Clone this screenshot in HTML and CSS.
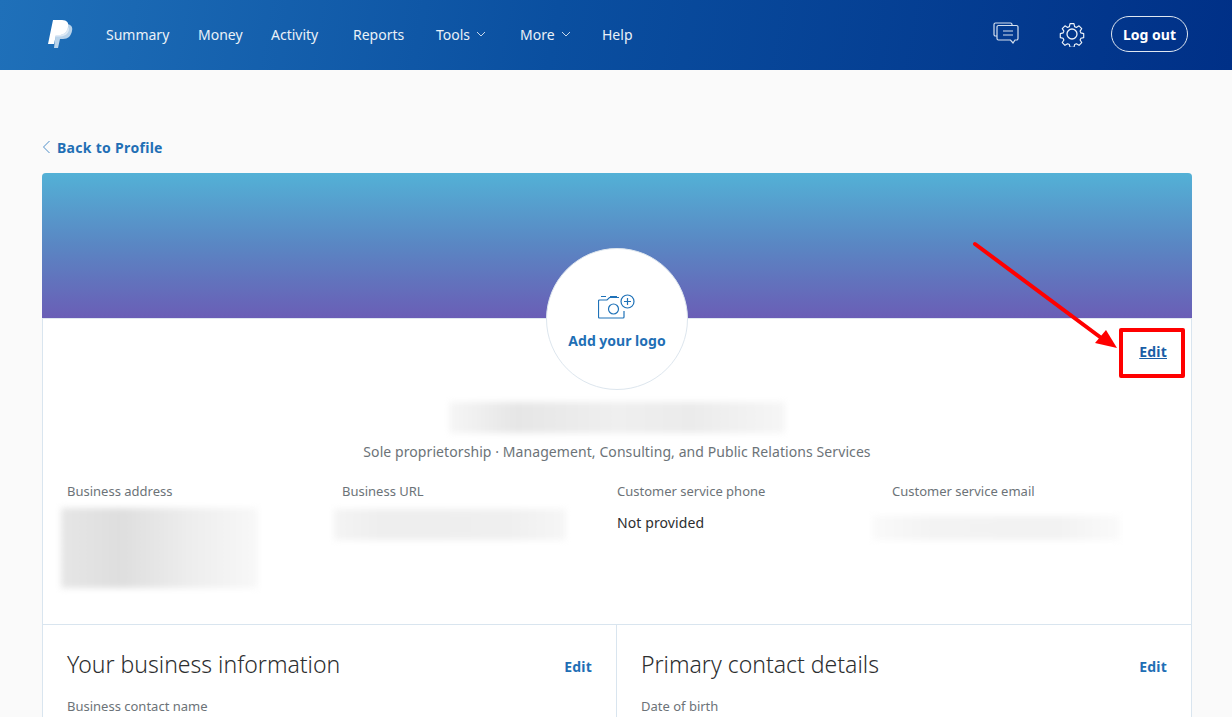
FILE: index.html
```html
<!DOCTYPE html>
<html lang="en">
<head>
  <meta charset="UTF-8" />
  <title>Business Profile</title>
  <link rel="stylesheet" href="styles.css">
</head>
<body>

  <nav class="topbar">
    <svg class="logo" width="26" height="30" viewBox="0 0 26 30">
      <path d="M9 5h9c5 0 7 3 6 7-1 5-4 8-9 8h-3l-2 9H6z" fill="#b9d3ea"/>
      <path d="M5 1h9c5 0 7 3 6 7-1 6-5 8-9 8H8l-2 9H0z" fill="#fff"/>
      <path d="M8 16h3c4 0 8-2 9-8 1 1 1 2 .8 3.500C20 15 17 17 13 17.500H8z" fill="#dfeaf5"/>
    </svg>
    <div class="nav-links">
      <a class="nav-link" href="#">Summary</a>
      <a class="nav-link" href="#">Money</a>
      <a class="nav-link" href="#">Activity</a>
      <a class="nav-link" href="#">Reports</a>
      <a class="nav-link" href="#">Tools
        <svg class="caret" width="10" height="6" viewBox="0 0 10 6"><path d="M1 1l4 4 4-4" fill="none" stroke="#c9d8ea"/></svg>
      </a>
      <a class="nav-link" href="#">More
        <svg class="caret" width="10" height="6" viewBox="0 0 10 6"><path d="M1 1l4 4 4-4" fill="none" stroke="#c9d8ea"/></svg>
      </a>
      <a class="nav-link" href="#">Help</a>
    </div>

    <div class="nav-right">
      <svg class="msg-icon" width="26" height="24" viewBox="0 0 26 24" fill="none" stroke="#d5e0ee" stroke-width="1.200">
        <path d="M19 3.500V2.500a1.500 1.500 0 0 0-1.500-1.500H2.500A1.500 1.500 0 0 0 1 2.500v10A1.500 1.500 0 0 0 2.500 14H4"/>
        <path d="M5.500 3.500h18A1.500 1.500 0 0 1 25 5v11.500a1.500 1.500 0 0 1-1.500 1.500H22l-2 3-2.500-3H5.500A1.500 1.500 0 0 1 4 16.500V5a1.500 1.500 0 0 1 1.500-1.500z"/>
        <path d="M10 9h10M10 13h10"/>
      </svg>
      <svg class="gear-icon" width="26" height="26" viewBox="0 0 26 26" fill="none" stroke="#eef3f9" stroke-width="1.300" stroke-linejoin="round">
        <circle cx="13" cy="13" r="5"/>
        <path d="M10.800 1.500h4.400l.7 3.300 2 .9 2.900-1.800 3 3.100-1.800 2.800.9 2 3.100.8v4.400l-3.100.7-.9 2 1.800 2.800-3 3.100-2.900-1.800-2 .9-.7 3.100h-4.400l-.7-3.100-2-.9-2.900 1.800-3-3.100 1.800-2.800-.9-2-3.100-.7v-4.400l3.100-.8.9-2-1.800-2.800 3-3.100 2.900 1.800 2-.9z" transform="translate(1.300 1.300) scale(.9)"/>
      </svg>
      <a class="logout" href="#">Log out</a>
    </div>
  </nav>

  <main class="page">
    <a class="back-link" href="#">
      <svg width="9" height="14" viewBox="0 0 9 14"><path d="M7.500 1L1.500 7l6 6" fill="none" stroke="#4f8fc9"/></svg>
      Back to Profile
    </a>

    <section class="card">
      <div class="banner"></div>

      <div class="logo-circle">
        <svg width="38" height="26" viewBox="0 0 38 26" fill="none" stroke="#1f72b8" stroke-width="1.200">
          <path d="M3 2.500h5M12 2.500h7M26 17v6a1 1 0 0 1-1 1H1.500a1 1 0 0 1-1-1V7a1 1 0 0 1 1-1H9l2.500-2.500H21"/>
          <circle cx="15.500" cy="15" r="5"/>
          <circle cx="29.500" cy="7.500" r="6.500"/>
          <path d="M29.500 4v7M26 7.500h7"/>
        </svg>
        <span class="logo-label">Add your logo</span>
      </div>

      <a class="edit edit-main" href="#">Edit</a>

      <div class="identity">
        <div class="smudge smudge-name"></div>
        <p class="biz-type">Sole proprietorship · Management, Consulting, and Public Relations Services</p>
      </div>

      <div class="details">
        <div class="detail">
          <div class="label">Business address</div>
          <div class="smudge smudge-address"></div>
        </div>
        <div class="detail">
          <div class="label">Business URL</div>
          <div class="smudge smudge-url"></div>
        </div>
        <div class="detail">
          <div class="label">Customer service phone</div>
          <div class="value">Not provided</div>
        </div>
        <div class="detail">
          <div class="label">Customer service email</div>
          <div class="smudge smudge-email"></div>
        </div>
      </div>

      <div class="panels">
        <div class="panel">
          <div class="panel-head">
            <h2>Your business information</h2>
            <a class="edit" href="#">Edit</a>
          </div>
          <div class="label">Business contact name</div>
        </div>
        <div class="panel">
          <div class="panel-head">
            <h2>Primary contact details</h2>
            <a class="edit" href="#">Edit</a>
          </div>
          <div class="label">Date of birth</div>
        </div>
      </div>
    </section>
  </main>

  <!-- annotation drawn over the page -->
  <div class="red-box"></div>
  <svg class="red-arrow" width="160" height="120" viewBox="0 0 160 120">
    <path d="M6 4L131 97" stroke="#f00" stroke-width="4" stroke-linecap="round"/>
    <path d="M148 108L126 103 137 90z" fill="#f00"/>
  </svg>

</body>
</html>
```

FILE: styles.css
```css
html, body {
  height: 717px;
  overflow: hidden;
}

body {
  margin: 0;
  background-color: #fafafa;
  font-family: "Noto Sans", sans-serif;
  color: #2c2e2f;
}

a {
  text-decoration: none;
}

.topbar {
  height: 70px;
  box-sizing: border-box;
  padding: 0 44px 2px 48px;
  display: flex;
  align-items: center;
  background: linear-gradient(100deg, #1f70b9 0%, #0a4fa0 45%, #003087 100%);
}

.logo {
  margin-right: 32px;
}

.nav-links {
  display: grid;
  grid-template-columns: 92px 73px 82px 83px 84px 82px auto;
}

.nav-link {
  color: #eaf1f8;
  font-size: 14px;
  display: flex;
  align-items: center;
  gap: 6px;
}

.nav-right {
  margin-left: auto;
  display: flex;
  align-items: center;
}

.msg-icon {
  margin-right: 40px;
}

.gear-icon {
  margin-right: 26px;
}

.logout {
  width: 77px;
  height: 36px;
  box-sizing: border-box;
  border: 1px solid #dfe7f1;
  border-radius: 18px;
  color: #fff;
  font-size: 14px;
  font-weight: 700;
  display: flex;
  align-items: center;
  justify-content: center;
}

.page {
  padding: 67px 40px 0 42px;
}

.back-link {
  height: 20px;
  display: flex;
  align-items: center;
  gap: 6px;
  color: #1f6fb5;
  font-size: 14px;
  font-weight: 700;
  letter-spacing: .3px;
}

.card {
  position: relative;
  margin-top: 16px;
  background-color: #fff;
  border: 1px solid #d9e5ef;
  border-top: none;
  border-radius: 4px 4px 0 0;
}

.banner {
  margin: 0 -1px;
  height: 145px;
  border-radius: 4px 4px 0 0;
  background: linear-gradient(180deg, #53b1d6 0%, #5a86c3 50%, #6a5eb6 100%);
  border-bottom: 1px solid #dfe8f0;
}

.logo-circle {
  position: absolute;
  top: 75px;
  left: 503px;
  width: 142px;
  height: 142px;
  box-sizing: border-box;
  border: 1px solid #dde6ee;
  border-radius: 50%;
  background-color: #fff;
  display: flex;
  flex-direction: column;
  align-items: center;
  padding-top: 45px;
  gap: 11px;
}

.logo-label {
  color: #1f6fb5;
  font-size: 14px;
  font-weight: 700;
  line-height: 20px;
}

.edit {
  color: #1f6fb5;
  font-size: 14px;
  font-weight: 700;
  letter-spacing: .2px;
}

.edit-main {
  position: absolute;
  top: 169px;
  right: 24px;
  color: #1a5ea6;
  text-decoration: underline;
}

.identity {
  padding-top: 83px;
  text-align: center;
}

.smudge {
  background-color: #ececec;
  filter: blur(3px);
}

.smudge-name {
  width: 336px;
  height: 31px;
  margin: 0 auto;
  background: linear-gradient(90deg, #f6f6f6, #e6e6e6 20%, #efefef 50%, #ebebeb 72%, #f6f6f6);
}

.biz-type {
  margin: 9px 0 0;
  font-size: 14px;
  line-height: 20px;
  color: #6c7378;
  letter-spacing: .08px;
}

.details {
  padding: 20px 0 0 24px;
  display: grid;
  grid-template-columns: repeat(4, 275px);
  height: 142px;
}

.label {
  font-size: 13px;
  line-height: 18px;
  color: #6c7378;
}

.value {
  margin-top: 13px;
  font-size: 14px;
  line-height: 20px;
  letter-spacing: .1px;
}

.smudge-address {
  width: 197px;
  height: 80px;
  margin: 8px 0 0 -6px;
  background: linear-gradient(90deg, #e6e6e6, #dedede 30%, #ededed 65%, #f8f8f8);
}

.smudge-url {
  width: 232px;
  height: 31px;
  margin: 9px 0 0 -8px;
  background: linear-gradient(90deg, #f4f4f4, #eeeeee 20%, #efefef 75%, #f6f6f6);
}

.smudge-email {
  width: 248px;
  height: 24px;
  margin: 16px 0 0 -20px;
  background: linear-gradient(90deg, #fafafa, #f3f3f3 25%, #f2f2f2 75%, #fafafa);
}

.panels {
  display: grid;
  grid-template-columns: 573px 1fr;
  border-top: 1px solid #d9e5ef;
  height: 120px;
}

.panel {
  padding: 23px 24px 0 24px;
}

.panel + .panel {
  border-left: 1px solid #d9e5ef;
}

.panel-head {
  display: flex;
  align-items: center;
  justify-content: space-between;
  margin-bottom: 17px;
}

.panel-head h2 {
  margin: 0;
  font-size: 23px;
  font-weight: 300;
  line-height: 32px;
}

.panel-head .edit {
  margin-top: 5px;
}

.red-box {
  position: absolute;
  top: 328px;
  left: 1119px;
  width: 66px;
  height: 50px;
  box-sizing: border-box;
  border: 4px solid #f00;
  border-radius: 2px;
}

.red-arrow {
  position: absolute;
  top: 240px;
  left: 969px;
}
```
